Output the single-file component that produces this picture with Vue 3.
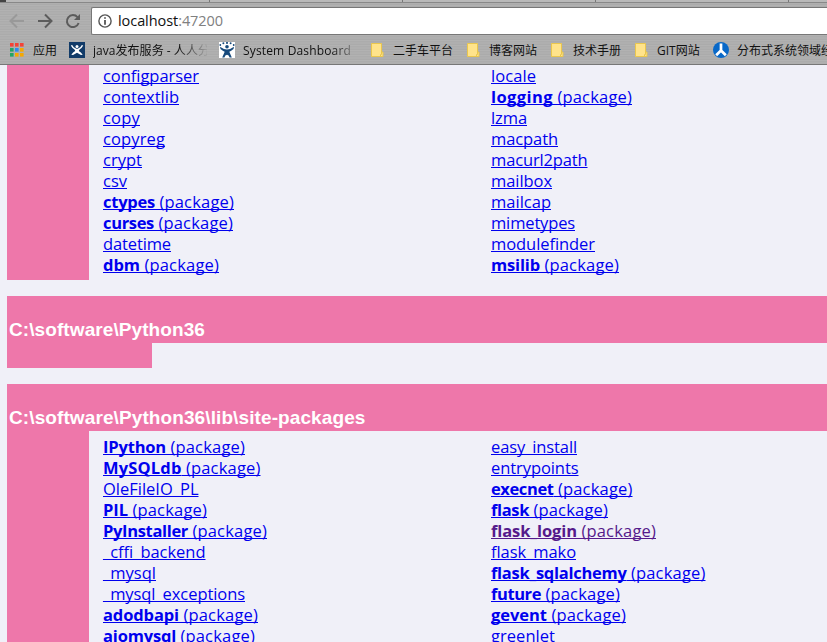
<script setup>
const vFit = {
  mounted(el, { value }) {
    if (!value) return
    const apply = () => {
      el.style.letterSpacing = '0px'
      const n = [...el.textContent].length
      const w = el.getBoundingClientRect().width
      el.style.letterSpacing = (value - w) / n + 'px'
    }
    apply()
    document.fonts.ready.then(apply)
  },
}

// [name, name width, is package, visited]
const upper = [
  [['configparser', 96], ['contextlib', 76], ['copy', 37], ['copyreg', 62], ['crypt', 39], ['csv', 24], ['ctypes', 52, 1], ['curses', 51, 1], ['datetime', 68], ['dbm', 37, 1]],
  [['locale', 45], ['logging', 62, 1], ['lzma', 36], ['macpath', 67], ['macurl2path', 96.5], ['mailbox', 61], ['mailcap', 60], ['mimetypes', 84], ['modulefinder', 104], ['msilib', 49, 1]],
]
const lower = [
  [['IPython', 63, 1], ['MySQLdb', 78.5, 1], ['OleFileIO_PL', 95.5], ['PIL', 25, 1], ['PyInstaller', 85, 1], ['_cffi_backend', 102.5], ['_mysql', 53], ['_mysql_exceptions', 142], ['adodbapi', 76, 1], ['aiomysql', 73, 1]],
  [['easy_install', 86], ['entrypoints', 87.5], ['execnet', 62.5, 1], ['flask', 38, 1], ['flask_login', 86, 1, 1], ['flask_mako', 85], ['flask_sqlalchemy', 135.5, 1], ['future', 50, 1], ['gevent', 56, 1], ['greenlet', 64]],
]
const sections = [
  { rows: upper, cls: 'first' },
  { title: 'C:\\software\\Python36', width: 196, cls: 'empty' },
  { title: 'C:\\software\\Python36\\lib\\site-packages', width: 356.5, rows: lower, cls: 'last' },
]
const folders = [
  { name: '二手车平台', w: 96 },
  { name: '博客网站', w: 84 },
  { name: '技术手册', w: 84 },
  { name: 'GIT网站', w: 78 },
]
const appColors = ['#f44336', '#f44336', '#f44336', '#22a565', '#2b8cf0', '#f5a800', '#22a565', '#f5a800', '#f5a800']
</script>

<template>
  <div class="window">
    <header class="chrome">
      <div class="tabs"><i class="dark"></i><i class="sep s1"></i><i class="sep"></i><i class="sep"></i><i class="sep"></i></div>
      <div class="nav">
        <svg class="buttons" width="91" height="28" viewBox="0 7 91 28" fill="none" stroke-width="2">
          <path d="M24 21H11M17 14.5L10.5 21L17 27.5" stroke="#999" />
          <path d="M38 21H51M45 14.5L51.5 21L45 27.5" stroke="#5c5c5c" />
          <path d="M77.5 17.2A6 6 0 1 0 78.6 23" stroke="#5c5c5c" />
          <path d="M80 14V20H74Z" fill="#5c5c5c" />
        </svg>
        <div class="address">
          <svg width="14" height="14" viewBox="0 0 14 14" fill="none" stroke="#555" stroke-width="1.4">
            <circle cx="7" cy="7" r="6.1" /><path d="M7 6V10.7M7 3.2V4.8" stroke-width="1.8" />
          </svg>
          <span v-fit="105" class="url">localhost<span class="port">:47200</span></span>
        </div>
      </div>
      <div class="bookmarks">
        <svg class="apps" width="14" height="14" viewBox="0 0 14 14">
          <rect v-for="(c, i) in appColors" :key="i" :x="(i % 3) * 5" :y="Math.floor(i / 3) * 5" width="3.6" height="3.6" :fill="c" />
        </svg>
        <span class="label l-apps">应用</span>
        <svg width="16" height="16" viewBox="0 0 16 16">
          <rect width="16" height="16" fill="#123b68" />
          <path d="M2.5 3.2Q4 6.5 6.8 7.5M13.5 3.2Q12 6.5 9.2 7.5" fill="none" stroke="#fff" stroke-width="1.5" />
          <circle cx="8" cy="4.4" r="1.5" fill="#fff" />
          <path d="M5.5 6.8H10.5L9.8 9Q12 10 13.7 12.8L12 13L8 10.8L4 13L2.3 12.8Q4 10 6.2 9Z" fill="#fff" />
        </svg>
        <span class="label fade l-java"><span v-fit="117">java发布服务 - 人人分</span></span>
        <svg width="16" height="16" viewBox="0 0 16 16">
          <rect width="16" height="16" fill="#fff" />
          <g fill="#174a7c"><circle cx="1.3" cy="3" r=".9" /><circle cx="4.4" cy="1.2" r="1" /><circle cx="8" cy=".9" r="1" /><circle cx="11.6" cy="1.2" r="1" /><circle cx="14.7" cy="3" r=".9" /><circle cx="8" cy="4.8" r="1.8" /></g>
          <path d="M1 4.8Q4.5 7.5 8 7.5Q11.5 7.5 15 4.8L14.5 7Q12 9.3 10.3 9.8L12.8 15.5H10.6Q10 12.7 8 12.7Q6 12.7 5.4 15.5H3.2L5.7 9.8Q4 9.3 1.5 7Z" fill="#174a7c" />
        </svg>
        <span class="label fade l-sys"><span v-fit="108">System Dashboard</span></span>
        <span v-for="f in folders" :key="f.name" class="folder" :style="{ width: f.w + 'px' }">
          <svg width="13" height="16" viewBox="0 0 13 16"><path d="M.5 1.5H10.5V10H12V14.5H.5Z" fill="#ffe38b" stroke="#e9c64e" /><path d="M10.5 10V12.5H9.5V14.5" fill="none" stroke="#e9c64e" /></svg>
          <span class="label">{{ f.name }}</span>
        </span>
        <svg width="16" height="16" viewBox="0 0 16 16">
          <circle cx="8" cy="8" r="8" fill="#0868c8" /><path d="M8 1.5V8.5L3.2 13.3M8 8.5L12.8 13.3" fill="none" stroke="#fff" stroke-width="2.7" />
        </svg>
        <span class="label l-last">分布式系统领域经</span>
      </div>
    </header>
    <main>
      <section v-for="s in sections" :key="s.cls" :class="s.cls">
        <h2 v-if="s.title"><span v-fit="s.width">{{ s.title }}</span></h2>
        <div v-if="s.rows" class="body">
          <div class="gutter"></div>
          <ul v-for="(col, i) in s.rows" :key="i">
            <li v-for="m in col" :key="m[0]">
              <a :class="{ visited: m[3] }"><strong v-if="m[2]" v-fit="m[1]">{{ m[0] }}</strong><span v-else v-fit="m[1]">{{ m[0] }}</span><span v-if="m[2]" v-fit="79">&nbsp;(package)</span></a>
            </li>
          </ul>
        </div>
        <div v-else class="stub"></div>
      </section>
    </main>
  </div>
</template>

<style>
body { background: #f0f0f8; overflow: hidden; }
</style>

<style scoped>
.window { width: 827px; height: 642px; overflow: hidden; background: #f0f0f8; font-family: "Open Sans", "Noto Sans CJK SC", sans-serif; }
.chrome { height: 65px; box-sizing: border-box; border-bottom: 1px solid #777; background: repeating-linear-gradient(#b2b2b2 0 1px, #acacac 1px 2px, #afafaf 2px 4px, #ababab 4px 5px); }
.tabs { display: flex; height: 7px; box-sizing: border-box; background: linear-gradient(#b9b9b9 0 2px, #888 2px 3px, transparent 3px); }
.dark { flex: none; width: 6px; height: 2px; background: #444; }
.sep { width: 1px; height: 2px; margin-right: 192px; background: #777; flex: none; }
.s1 { margin-left: 203px; }
.nav { display: flex; height: 28px; }
.buttons { flex: none; }
.address { display: flex; flex: 1; align-items: center; box-sizing: border-box; height: 28px; padding-left: 6px; border: 1px solid #777; border-right: 0; border-radius: 2px 0 0 2px; background: #fff; }
.url { margin-left: 6px; color: #111; font-size: 14.5px; line-height: 26px; white-space: nowrap; }
.port { color: #808080; }
.bookmarks { display: flex; align-items: center; height: 29px; padding: 1px 0 0 10px; box-sizing: border-box; }
.bookmarks svg { flex: none; }
.label { flex: none; padding-top: 1px; font-size: 12px; line-height: 18px; color: #111; white-space: nowrap; }
.l-apps { width: 36px; margin-left: 9px; }
.l-java { width: 114px; margin: 0 12px 0 8px; }
.l-sys { width: 110px; margin: 0 18px 0 8px; }
.l-last { margin-left: 8px; }
.l-java.fade { -webkit-mask-image: linear-gradient(to right, #000 75%, transparent 102%); }
.l-sys.fade { -webkit-mask-image: linear-gradient(to right, #000 80%, rgba(0, 0, 0, .3) 100%); }
.folder { display: flex; flex: none; align-items: center; }
.folder .label { margin-left: 9px; }
main { padding-left: 7px; }
.first .body { height: 215px; }
.empty, .last { margin-top: 16px; }
h2 { display: flex; align-items: flex-end; height: 47px; margin: 0; padding: 0 0 3px 2px; box-sizing: border-box; background: #ee77aa; color: #fff; font: bold 19px/20px "Liberation Sans", Arial, sans-serif; white-space: nowrap; }
.stub { width: 145px; height: 25px; background: #ee77aa; }
.body { display: grid; grid-template-columns: 82px 388px 1fr; }
.gutter { background: #ee77aa; }
ul { list-style: none; margin: 0; padding: 0 0 0 14px; }
.last ul { padding-top: 5px; }
li { height: 21px; font-size: 16.5px; line-height: 21px; white-space: nowrap; }
a { color: #0000ee; text-decoration: underline 1px; text-underline-offset: 1px; text-decoration-skip-ink: none; }
a.visited { color: #551a8b; }
strong { font-weight: 700; }
</style>
